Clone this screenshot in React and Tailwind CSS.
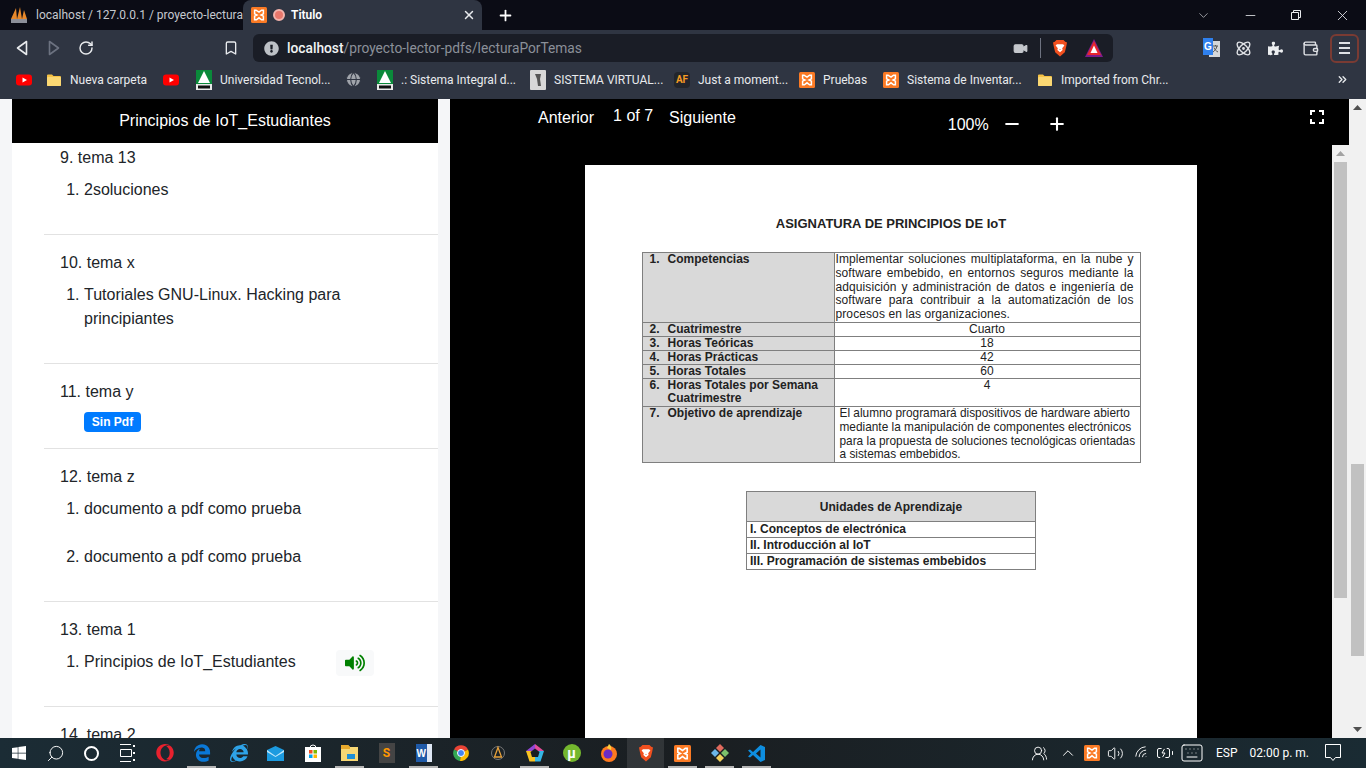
import { ChevronDown, Minus, Plus, X, RotateCw, Bookmark, Video, Atom, Wallet, Search, Volume2, Keyboard, Wifi, ChevronUp, UsersRound, ChevronsRight, BatteryCharging, Globe } from "lucide-react";
import { FaVolumeUp, FaWindows, FaPuzzlePiece, FaOpera, FaEdgeLegacy, FaInternetExplorer, FaExclamationCircle } from "react-icons/fa";

const ui = "font-['Roboto',sans-serif]";

function Xampp({ size = 16 }) {
  return (
    <svg width={size} height={size} viewBox="0 0 16 16" className="shrink-0">
      <rect width="16" height="16" rx="1.5" fill="#fb7a24" />
      <path d="M5 3.2H3.6v3.6L6 8 3.6 9.2v3.6H5.4L8 10.8l2.6 2h1.8V9.2L10 8l2.4-1.2V3.2H10.6L8 5.2z" fill="none" stroke="#fff" strokeWidth="1.5" />
    </svg>
  );
}

function Youtube() {
  return (
    <svg width="16" height="16" viewBox="0 0 16 16" className="shrink-0">
      <rect x="0" y="2.5" width="16" height="11" rx="3" fill="#f00" />
      <path d="M6.5 5.5 11 8l-4.500 2.500z" fill="#fff" />
    </svg>
  );
}

function Folder({ size = 16 }) {
  return (
    <svg width={size} height={size} viewBox="0 0 16 16" className="shrink-0">
      <path d="M1 3.500A1 1 0 0 1 2 2.500h4l1.500 1.500H14a1 1 0 0 1 1 1v8a1 1 0 0 1-1 1H2a1 1 0 0 1-1-1z" fill="#f6c244" />
      <rect x="1" y="5" width="14" height="9" rx="1" fill="#fbd873" />
    </svg>
  );
}

function Utn() {
  return (
    <svg width="16" height="20" viewBox="0 0 16 20" className="shrink-0">
      <rect width="16" height="14" fill="#0a8a3a" />
      <path d="M8 1 14 13H2z" fill="#fff" />
      <rect y="14" width="16" height="6" fill="#e8e8e8" />
      <rect x="2" y="15.500" width="12" height="3" fill="#111" />
    </svg>
  );
}

function Brave({ size = 18 }) {
  return (
    <svg width={size} height={size * 1.15} viewBox="0 0 18 21" className="shrink-0">
      <path d="M5 1h8l2 2 2 1-1 5-1.500 6L9 20l-5.500-5L2 9 1 4l2-1z" fill="#f1501f" />
      <path d="M5.500 6h7L14 7.500l-2.500 3 .5 2L9 15l-3-2.500.5-2-2.500-3z" fill="#fff" />
      <path d="M8 11.500h2l-1 1.200z" fill="#f1501f" />
    </svg>
  );
}

function Bat() {
  return (
    <svg width="18" height="18" viewBox="0 0 18 18" className="shrink-0">
      <path d="M9 0 18 18H0z" fill="#7d1c8a" />
      <path d="M9 2 16 16H2z" fill="#e8262d" />
      <path d="M9 6.500 12.500 14h-7z" fill="#fff" />
    </svg>
  );
}

function Translate() {
  return (
    <svg width="17" height="20" viewBox="0 0 17 20" className="shrink-0">
      <rect x="6" y="3" width="11" height="16" fill="#d5d7da" />
      <path d="M10 8h5M12.500 7v1M14 8c-.5 3-2.500 5-4 6M11 9.500c.7 2 2 3.500 4 4.500" stroke="#555" fill="none" />
      <rect width="10" height="17" fill="#2f80ed" />
      <text x="5" y="12" fontSize="10" fontWeight="700" textAnchor="middle" fill="#fff" className="font-['Liberation_Sans',sans-serif]">G</text>
    </svg>
  );
}

function Arrow({ dir = "up", color = "#505050" }) {
  return (
    <div className="h-[17px] flex items-center justify-center shrink-0">
      <svg width="9" height="5" viewBox="0 0 9 5">
        <path d={dir === "up" ? "M4.500 0 9 5H0z" : "M0 0h9L4.500 5z"} fill={color} />
      </svg>
    </div>
  );
}

function Tabs() {
  return (
    <div className={`h-[30px] bg-[#0b0c15] flex items-end text-[12px] ${ui}`}>
      <div className="w-[243px] h-[30px] flex items-center pl-[10px] gap-2 overflow-hidden shrink-0">
        <svg width="18" height="18" viewBox="0 0 18 18" className="shrink-0">
          <path d="M1 13 6 2l1 11zM7 13 10 1l2 12zM12 13l2-9 3 9z" fill="#e8892b" />
          <rect x="1" y="13" width="16" height="4" fill="#8c8f99" />
        </svg>
        <span className="text-[#c6c9cf] whitespace-nowrap">localhost / 127.0.0.1 / proyecto-lectura</span>
      </div>
      <div className="w-[239px] h-[30px] bg-[#2f3542] rounded-t-lg flex items-center pl-2 pr-[6px] shrink-0">
        <Xampp />
        <span className="w-[12px] h-[12px] ml-[6px] rounded-full bg-[#e8776c] border-2 border-[#f3b3ac] shrink-0" />
        <span className="ml-[6px] text-white font-semibold flex-1">Titulo</span>
        <X size={14} strokeWidth={2.5} className="text-[#e8eaed]" />
      </div>
      <div className="h-[30px] flex items-center ml-[15px]">
        <Plus size={17} strokeWidth={2.500} className="text-white" />
      </div>
      <div className="ml-auto h-[30px] flex items-center text-[#e8eaed]">
        <ChevronDown size={15} strokeWidth={1} className="mr-[32px]" />
        <Minus size={15} strokeWidth={1.300} className="mr-[33px]" />
        <svg width="10" height="10" viewBox="0 0 10 10" fill="none" stroke="currentColor" className="mr-[33px]">
          <path d="M.5 2.500h7v7h-7zM2.500 2.500v-2h7v7h-2" />
        </svg>
        <X size={17} strokeWidth={1.200} className="mr-[15px]" />
      </div>
    </div>
  );
}

function AddressBar() {
  return (
    <div className={`h-[36px] bg-[#2f3542] flex items-center text-[#dfe1e5] ${ui}`}>
      <svg width="12" height="16" viewBox="0 0 12 16" className="ml-[16px]">
        <path d="M10.500 1.500v13L1.500 8z" fill="none" stroke="#e8eaed" strokeWidth="1.600" strokeLinejoin="round" />
      </svg>
      <svg width="12" height="16" viewBox="0 0 12 16" className="ml-[20px]">
        <path d="M1.500 1.500v13l9-6.500z" fill="none" stroke="#6c7280" strokeWidth="1.600" strokeLinejoin="round" />
      </svg>
      <RotateCw size={16} strokeWidth={2.200} className="ml-[18px] text-[#e8eaed]" />
      <Bookmark size={16} strokeWidth={2} className="ml-[129px] text-[#e8eaed]" />
      <div className="ml-[14px] w-[860px] h-[28px] rounded-md bg-[#1a1d26] flex items-center">
        <FaExclamationCircle size={15} className="ml-[11px] text-[#bdc1c6]" />
        <span className="ml-[8px] text-[13.75px] text-[#f1f3f4] font-medium">localhost<span className="text-[#8b9099] font-normal">/proyecto-lector-pdfs/lecturaPorTemas</span></span>
        <Video size={15} className="ml-auto text-[#c4c7cc] fill-[#c4c7cc]" />
        <span className="w-px h-[20px] bg-[#6d7280] ml-[12px]" />
        <span className="ml-[11px]"><Brave size={16} /></span>
        <span className="ml-[17px] mr-[10px]"><Bat /></span>
      </div>
      <span className="ml-[90px]"><Translate /></span>
      <Atom size={17} className="ml-[15px] text-[#dfe1e5]" />
      <FaPuzzlePiece size={15} className="ml-[16px] text-[#eceef0]" />
      <Wallet size={17} className="ml-[19px] text-[#dfe1e5]" />
      <div className="ml-[11px] w-[29px] h-[29px] rounded-md border-2 border-[#7a3b33] flex flex-col items-center justify-center gap-[3px]">
        <span className="w-[11px] h-[2px] bg-[#dfe1e5]" />
        <span className="w-[11px] h-[2px] bg-[#dfe1e5]" />
        <span className="w-[11px] h-[2px] bg-[#dfe1e5]" />
      </div>
    </div>
  );
}

const bookmarks = [
  { w: "w-[30px]", icon: <Youtube /> },
  { w: "w-[117px]", icon: <Folder />, text: "Nueva carpeta" },
  { w: "w-[33px]", icon: <Youtube /> },
  { w: "w-[149px]", icon: <Utn />, text: "Universidad Tecnol..." },
  { w: "w-[32px]", icon: <Globe size={17} strokeWidth={1.500} className="text-[#2f3542] fill-[#a0a4ab]" /> },
  { w: "w-[153px]", icon: <Utn />, text: ".: Sistema Integral d..." },
  {
    w: "w-[144px]",
    icon: (
      <svg width="16" height="20" viewBox="0 0 16 20" className="shrink-0">
        <rect width="16" height="20" rx="1" fill="#d8d8d8" />
        <path d="M5 4h6l-1 5 1 7H8L7 9z" fill="#555" />
      </svg>
    ),
    text: "SISTEMA VIRTUAL...",
  },
  {
    w: "w-[125px]",
    icon: <span className="w-[16px] h-[16px] rounded-sm bg-[#22252c] text-[10px] font-bold text-[#f59a23] flex items-center justify-center shrink-0">AF</span>,
    text: "Just a moment...",
  },
  { w: "w-[84px]", icon: <Xampp />, text: "Pruebas" },
  { w: "w-[154px]", icon: <Xampp />, text: "Sistema de Inventar..." },
  { w: "w-[280px]", icon: <Folder />, text: "Imported from Chr..." },
];

function BookmarksBar() {
  return (
    <div className={`h-[33px] bg-[#2f3542] flex items-center pl-[16px] pb-[6px] text-[12px] text-[#e8eaed] ${ui}`}>
      {bookmarks.map((b, i) => (
        <div key={i} className={`${b.w} flex items-center gap-2 shrink-0 whitespace-nowrap`}>
          {b.icon}
          {b.text && <span>{b.text}</span>}
        </div>
      ))}
      <ChevronsRight size={13} strokeWidth={2.500} className="ml-[19px] text-[#e8eaed]" />
    </div>
  );
}

function Sidebar() {
  const section = "ml-8 pl-4 pt-4 pb-2 border-b border-[#e2e2e2]";
  const sub = "list-decimal list-outside pl-6 pr-6 mt-2";
  return (
    <div className="w-[450px] shrink-0 bg-[#f5f6f8] px-3">
      <div className="w-[426px] h-full bg-white flex flex-col overflow-hidden font-['Liberation_Sans',sans-serif] text-[16px] leading-6 text-[#212529]">
        <div className="h-[44px] shrink-0 bg-black text-white flex items-center justify-center">Principios de IoT_Estudiantes</div>
        <ol start={9} className="list-decimal list-inside">
          <li className="ml-8 pl-4 pt-[3px] pb-2 border-b border-[#e2e2e2]">
            tema 13
            <ol className={sub}><li className="mb-6">2soluciones</li></ol>
          </li>
          <li className={section}>
            tema x
            <ol className={sub}><li className="mb-6">Tutoriales GNU-Linux. Hacking para principiantes</li></ol>
          </li>
          <li className={section}>
            tema y
            <div className="ml-6 mt-2 mb-2 w-[57px] h-[20px] rounded bg-[#007bff] text-white text-[12px] leading-5 font-bold text-center">Sin Pdf</div>
          </li>
          <li className={section}>
            tema z
            <ol className={sub}>
              <li className="mb-6">documento a pdf como prueba</li>
              <li className="mb-6">documento a pdf como prueba</li>
            </ol>
          </li>
          <li className={section}>
            tema 1
            <ol className={sub}>
              <li className="mb-6">
                Principios de IoT_Estudiantes
                <span className="inline-flex items-center justify-center align-middle w-[38px] h-[26px] -my-1 ml-[40px] rounded bg-[#f8f9fa] text-[#008000]"><FaVolumeUp size={20} /></span>
              </li>
            </ol>
          </li>
          <li className={section}>tema 2</li>
        </ol>
      </div>
    </div>
  );
}

function PdfPage() {
  const label = "border border-[#7f7f7f] bg-[#d9d9d9] align-top p-0 font-bold";
  const value = "border border-[#7f7f7f] align-top p-0 text-center";
  const unit = "h-[16px] border border-[#7f7f7f] pl-[3px] p-0 align-top leading-[14px]";
  const rows = [
    ["2.", "Cuatrimestre", "Cuarto"],
    ["3.", "Horas Teóricas", "18"],
    ["4.", "Horas Prácticas", "42"],
    ["5.", "Horas Totales", "60"],
  ];
  const Label = ({ n, children }) => (
    <div className="flex pl-[7px]"><span className="w-[18px] shrink-0">{n}</span><span>{children}</span></div>
  );
  return (
    <div className="w-[612px] mt-5 bg-white flex flex-col items-center pt-[51px] font-['Liberation_Sans',sans-serif] text-[12px] leading-[14px] text-[#222]">
      <h2 className="text-[13px] leading-4 font-bold">ASIGNATURA DE PRINCIPIOS DE IoT</h2>
      <table className="mt-5 w-[499px] table-fixed border-collapse">
        <colgroup><col className="w-[192px]" /><col /></colgroup>
        <tbody className="leading-[13px]">
          <tr className="leading-[13.8px]">
            <td className={label}><Label n="1.">Competencias</Label></td>
            <td className="border border-[#7f7f7f] align-top p-0 pr-[6px] pl-px text-justify tracking-[0.1px]">
              Implementar soluciones multiplataforma, en la nube y software embebido, en entornos seguros mediante la adquisición y administración de datos e ingeniería de software para contribuir a la automatización de los procesos en las organizaciones.
            </td>
          </tr>
          {rows.map(([n, l, v]) => (
            <tr key={n}>
              <td className={label}><Label n={n}>{l}</Label></td>
              <td className={value}>{v}</td>
            </tr>
          ))}
          <tr className="leading-[13.5px]">
            <td className={label}><Label n="6.">Horas Totales por Semana Cuatrimestre</Label></td>
            <td className={value}>4</td>
          </tr>
          <tr className="leading-[13.8px]">
            <td className={label}><Label n="7.">Objetivo de aprendizaje</Label></td>
            <td className="border border-[#7f7f7f] align-top p-0 pl-[5px] text-[11.85px]">
              El alumno programará dispositivos de hardware abierto mediante la manipulación de componentes electrónicos para la propuesta de soluciones tecnológicas orientadas a sistemas embebidos.
            </td>
          </tr>
        </tbody>
      </table>
      <table className="mt-7 w-[290px] border-collapse font-bold">
        <tbody>
          <tr><td className="h-[30px] border border-[#7f7f7f] bg-[#d9d9d9] text-center p-0">Unidades de Aprendizaje</td></tr>
          <tr><td className={unit}>I. Conceptos de electrónica</td></tr>
          <tr><td className={unit}>II. Introducción al IoT</td></tr>
          <tr><td className={unit}>III. Programación de sistemas embebidos</td></tr>
        </tbody>
      </table>
    </div>
  );
}

function Viewer() {
  return (
    <div className="flex-1 min-w-0 bg-black flex flex-col font-['Liberation_Sans',sans-serif] text-[16px] leading-[18px] text-white">
      <div className="h-[46px] shrink-0 flex items-start pl-[88px]">
        <span className="mt-[10px]">Anterior</span>
        <span className="mt-2 ml-[19px]">1 of 7</span>
        <span className="mt-[10px] ml-4">Siguiente</span>
        <span className="mt-[17px] ml-[212px]">100%</span>
        <Minus size={20} strokeWidth={2.500} className="mt-[15px] ml-[13px]" />
        <Plus size={20} strokeWidth={2.500} className="mt-[15px] ml-[25px]" />
        <svg width="14" height="14" viewBox="0 0 14 14" fill="none" stroke="#fff" strokeWidth="2" className="mt-[11px] ml-[243px]">
          <path d="M1 5V1h4M9 1h4v4M13 9v4H9M5 13H1V9" />
        </svg>
      </div>
      <div className="flex-1 min-h-0 flex overflow-hidden">
        <div className="flex-1 flex justify-center overflow-hidden"><PdfPage /></div>
        <div className="w-[17px] shrink-0 bg-[#f1f1f1]">
          <Arrow color="#a3a3a3" />
          <div className="h-[436px] mx-[2px] bg-[#c1c1c1]" />
        </div>
      </div>
    </div>
  );
}

function Cell({ w = "w-[37px]", line, active, children }) {
  return (
    <div className={`${w} h-[30px] shrink-0 relative flex items-center justify-center ${active ? "bg-white/10" : ""}`}>
      {children}
      {line && <span className="absolute bottom-0 left-[4px] right-[4px] h-[2px] bg-[#b5b5b5]" />}
    </div>
  );
}

function Taskbar() {
  return (
    <div className={`h-[30px] shrink-0 bg-gradient-to-r from-[#1b2c35] via-[#1a1e21] to-[#1a2b33] flex items-center text-white text-[12px] ${ui}`}>
      <Cell><FaWindows size={16} /></Cell>
      <Cell w="w-[36px]"><Search size={19} strokeWidth={1.200} className="-scale-x-100" /></Cell>
      <Cell w="w-[36px]"><span className="w-[15px] h-[15px] rounded-full border-2 border-white" /></Cell>
      <Cell>
        <svg width="16" height="18" viewBox="0 0 16 18" fill="none" stroke="#fff">
          <path d="M0 .5h11M0 17.500h11M.5 5.500h11v7H.5z" />
          <path d="M14 1v2M14 8v2M14 15v2" strokeWidth="2" />
        </svg>
      </Cell>
      <Cell><FaOpera size={18} className="text-[#e8212e]" /></Cell>
      <Cell line><FaEdgeLegacy size={18} className="text-[#0a78d7]" /></Cell>
      <Cell><FaInternetExplorer size={18} className="text-[#2ea3e8]" /></Cell>
      <Cell>
        <svg width="17" height="15" viewBox="0 0 17 15"><path d="M0 4 8.500 0 17 4v11H0z" fill="#1c9be0" /><path d="m0 4 8.500 6L17 4v2l-8.500 5L0 6z" fill="#bfe6fa" /></svg>
      </Cell>
      <Cell>
        <svg width="16" height="18" viewBox="0 0 16 18">
          <path d="M5 4a3 3 0 0 1 6 0" fill="none" stroke="#fff" />
          <rect y="3" width="16" height="15" fill="#fff" />
          <rect x="4" y="6" width="3.500" height="3.500" fill="#f25022" /><rect x="8.500" y="6" width="3.500" height="3.500" fill="#7fba00" />
          <rect x="4" y="10.500" width="3.500" height="3.500" fill="#00a4ef" /><rect x="8.500" y="10.500" width="3.500" height="3.500" fill="#ffb900" />
        </svg>
      </Cell>
      <Cell line>
        <svg width="17" height="16" viewBox="0 0 17 16"><path d="M0 0h7l2 2h8v14H0z" fill="#f7d774" /><path d="M0 0h7l2 2v2H0z" fill="#e8a92c" /><rect x="6" y="9" width="8" height="5" fill="#1f8fd6" /></svg>
      </Cell>
      <Cell>
        <span className="w-[16px] h-[20px] bg-[#444] flex items-center justify-center text-[12px] font-bold text-[#ff9800]">S</span>
      </Cell>
      <Cell line>
        <div className="w-[16px] h-[18px] bg-[#1f5aa8] flex items-center justify-start pl-px text-[10px] font-bold font-['Liberation_Sans',sans-serif] border-r-[5px] border-[#dfe8f5]">W</div>
      </Cell>
      <Cell>
        <svg width="16" height="16" viewBox="0 0 16 16">
          <path d="M8 8 1 4.500A8 8 0 0 1 15 4.500z" fill="#ea4335" />
          <path d="M8 8 1 4.500A8 8 0 0 0 7 16z" fill="#34a853" />
          <path d="M8 8 15 4.500A8 8 0 0 1 7 16z" fill="#fbbc05" />
          <circle cx="8" cy="8" r="3.500" fill="#4285f4" stroke="#fff" />
        </svg>
      </Cell>
      <Cell>
        <svg width="16" height="16" viewBox="0 0 16 16" fill="none"><circle cx="8" cy="8" r="6.500" stroke="#777" /><path d="M8 2.500 11.500 12h-7z" stroke="#e9a23b" strokeWidth="1.300" /></svg>
      </Cell>
      <Cell line>
        <svg width="18" height="18" viewBox="0 0 18 18">
          <path d="M9 0 18 7l-9 0z" fill="#e44d9a" /><path d="M9 0 0 7h9z" fill="#9146d6" /><path d="M0 7 3.500 17.500H9V7z" fill="#f8c322" /><path d="M18 7 14.500 17.500H9V7z" fill="#35b6e6" />
          <path d="M9 4.500 13.500 8 12 13H6L4.500 8z" fill="#1a1e21" />
        </svg>
      </Cell>
      <Cell>
        <span className="w-[18px] h-[18px] rounded-full bg-[#74b72e] text-white text-[14px] font-bold flex items-center justify-center">µ</span>
      </Cell>
      <Cell>
        <svg width="18" height="18" viewBox="0 0 18 18"><circle cx="9" cy="10" r="8" fill="#ff7a1f" /><circle cx="8" cy="10" r="4.500" fill="#6a2bc7" /><path d="M9 0c2 2 3 3 2 6L7 4z" fill="#ffcf3f" /></svg>
      </Cell>
      <Cell active><Brave size={16} /></Cell>
      <Cell line><Xampp size={17} /></Cell>
      <Cell line>
        <svg width="18" height="18" viewBox="0 0 18 18">
          <path d="M9 0 13 4 9 8 5 4z" fill="#e06a5d" /><path d="M4 5l4 4-4 4-4-4z" fill="#6cb6e8" /><path d="M14 5l4 4-4 4-4-4z" fill="#7cc06a" /><path d="M9 10l4 4-4 4-4-4z" fill="#f2cf5b" />
        </svg>
      </Cell>
      <Cell line>
        <svg width="17" height="17" viewBox="0 0 17 17"><path d="M12.500 0 17 2v13l-4.500 2L5 10l-3 2.500L0 11.500 3 8.500 0 5.500 2 4.500 5 7z" fill="#0e8ee0" /><path d="M12.500 4.500 8 8.500l4.500 4z" fill="#1a1e21" /></svg>
      </Cell>
      <div className="flex items-center ml-auto h-full">
        <UsersRound size={17} strokeWidth={1.300} />
        <ChevronUp size={18} strokeWidth={1.300} className="ml-[11px]" />
        <span className="ml-[7px]"><Xampp size={16} /></span>
        <Volume2 size={17} strokeWidth={1.300} className="ml-[7px]" />
        <Wifi size={16} strokeWidth={1.300} className="ml-[10px] -rotate-45" />
        <BatteryCharging size={18} strokeWidth={1.300} className="ml-[6px]" />
        <Keyboard size={24} strokeWidth={1} className="ml-[6px]" />
        <span className="ml-[12px]">ESP</span>
        <span className="ml-[12px] whitespace-nowrap">02:00 p. m.</span>
        <svg width="16" height="18" viewBox="0 0 16 18" fill="none" stroke="#fff" className="ml-[16px] mr-[25px]">
          <path d="M.5.500h15v13h-5L8 16.500 5.500 13.500h-5z" />
        </svg>
      </div>
    </div>
  );
}

export default function App() {
  return (
    <div className="w-[1366px] h-[768px] flex flex-col overflow-hidden bg-black">
      <Tabs />
      <AddressBar />
      <BookmarksBar />
      <div className="flex-1 min-h-0 flex">
        <Sidebar />
        <Viewer />
        <div className="w-[17px] shrink-0 bg-[#f1f1f1] flex flex-col">
          <Arrow />
          <div className="h-[192px] mt-[348px] mx-[2px] bg-[#c1c1c1]" />
          <div className="mt-auto"><Arrow dir="down" /></div>
        </div>
      </div>
      <Taskbar />
    </div>
  );
}
